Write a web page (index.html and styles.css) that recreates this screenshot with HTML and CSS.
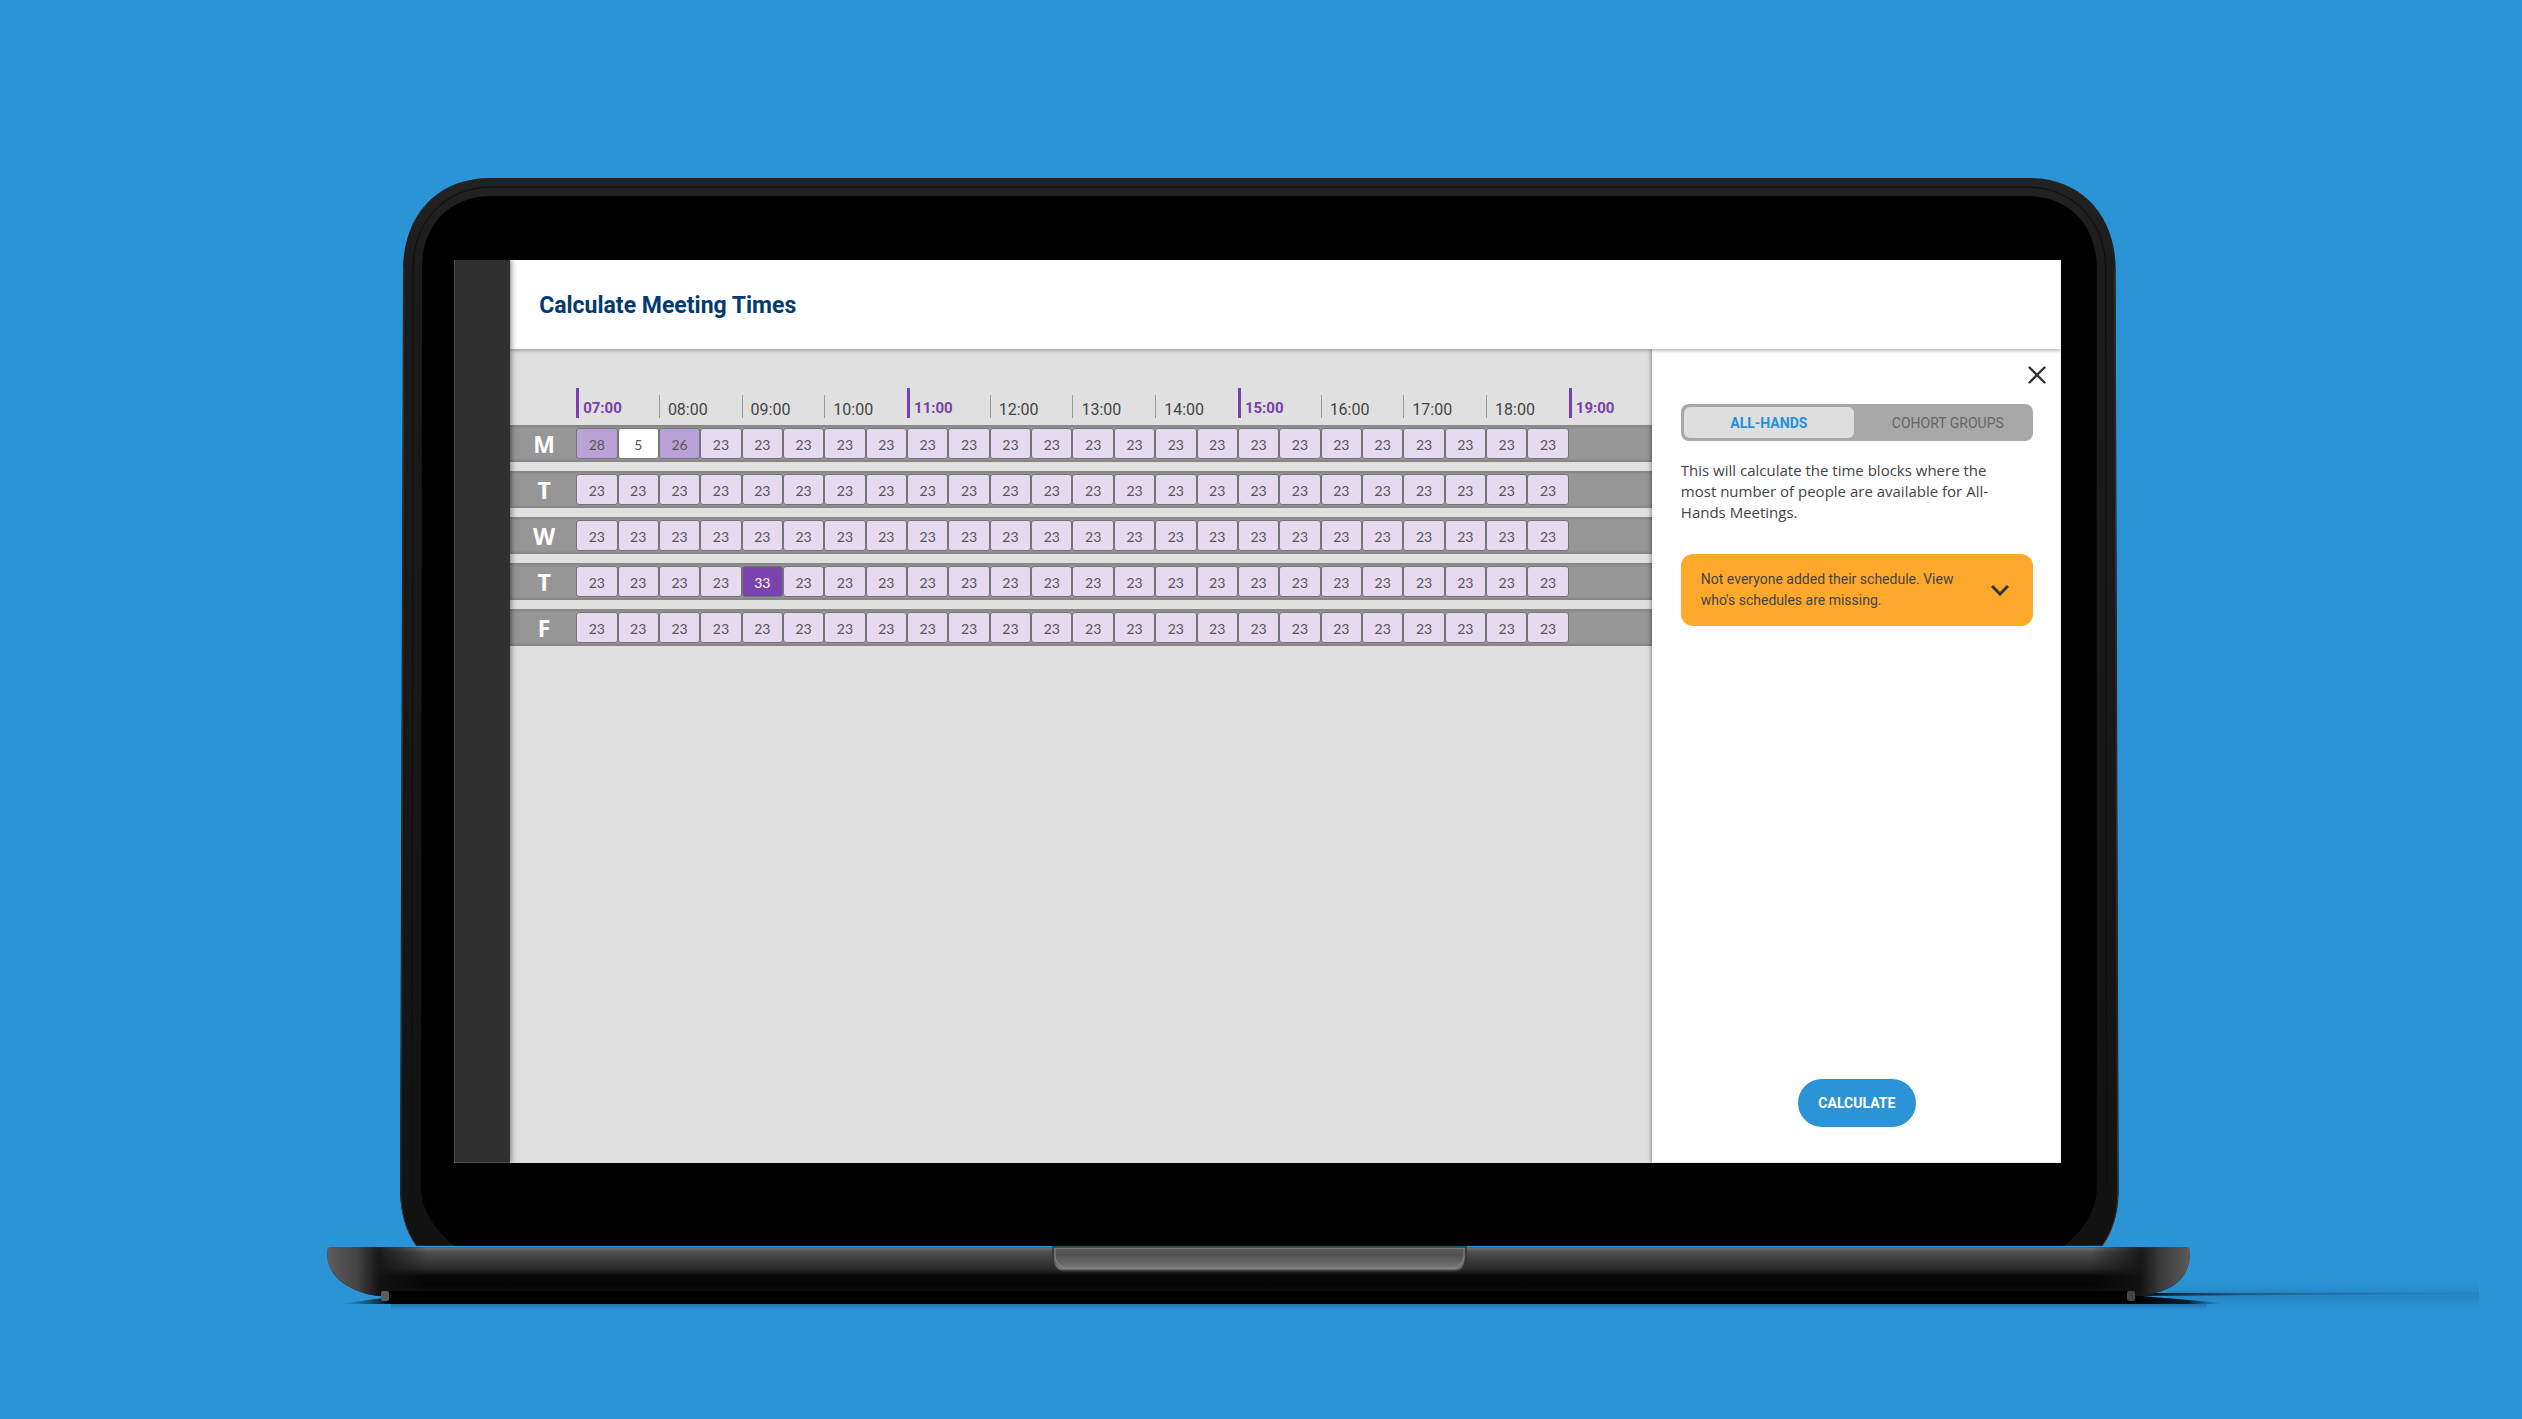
FILE: index.html
```
<!DOCTYPE html>
<html lang="en">
<head>
<meta charset="utf-8">
<meta name="viewport" content="width=device-width, initial-scale=1">
<title>Calculate Meeting Times</title>
<link rel="stylesheet" href="styles.css">
</head>
<body>
<div class="laptop">
  <div class="lid">
    <svg class="lid-shape" viewBox="0 0 1718 1068" preserveAspectRatio="none" aria-hidden="true">
      <defs>
        <linearGradient id="rim" x1="0" y1="0" x2="0" y2="1">
          <stop offset="0" stop-color="#222"/>
          <stop offset=".1" stop-color="#1b1b1b"/>
          <stop offset="1" stop-color="#121212"/>
        </linearGradient>
      </defs>
      <path fill="url(#rim)" d="M3 90C4 36 38 0 90 0H1628C1680 0 1714 36 1715 90L1718 1015Q1717 1046 1702 1068H16Q1 1046 0 1015Z"/>
      <path fill="none" stroke="#0e0e0e" d="M12 1010L13 90C14 42 46 9 92 9H1626C1672 9 1704 42 1705 90L1706 1010"/>
      <path fill="none" stroke="#3b302c" d="M1702 1067Q1717 1046 1717 1015L1714 90M16 1067Q1 1046 1 1015L4 90"/>
      <path fill="#000" d="M22 90C22 46 50 18 92 18H1626C1668 18 1696 46 1696 90V1015Q1693 1044 1664 1068H54Q25 1044 21 1015Z"/>
    </svg>
    <div class="screen">
      <nav class="rail" aria-label="Main"></nav>
      <div class="app">
        <header class="topbar"><h1>Calculate Meeting Times</h1></header>
        <div class="workspace">
          <main class="board">
            <table class="schedule">
              <colgroup><col class="col-day"><col span="24"><col class="col-end"></colgroup>
              <thead><tr id="hours"><td></td></tr></thead>
              <tbody id="days"></tbody>
            </table>
          </main>
          <aside class="panel">
            <button class="close" type="button" aria-label="Close">
              <svg viewBox="0 0 18 18" width="18" height="18"><path d="M1.5 1.5L16.5 16.5M16.5 1.5L1.5 16.5"/></svg>
            </button>
            <div class="tabs" role="tablist">
              <button class="tab tab-active" type="button" role="tab" aria-selected="true">ALL-HANDS</button>
              <button class="tab" type="button" role="tab" aria-selected="false">COHORT GROUPS</button>
            </div>
            <p class="intro">This will calculate the time blocks where the most number of people are available for All-Hands Meetings.</p>
            <button class="notice" type="button" aria-expanded="false">
              <span>Not everyone added their schedule. View who's schedules are missing.</span>
              <svg viewBox="0 0 18 12" width="18" height="12" aria-hidden="true"><path d="M1 2L9 10L17 2"/></svg>
            </button>
            <button class="calculate" type="button">CALCULATE</button>
          </aside>
        </div>
      </div>
    </div>
  </div>
  <svg class="base" viewBox="0 0 1864 60" preserveAspectRatio="none" aria-hidden="true">
    <defs>
      <linearGradient id="deck" x1="0" y1="0" x2="0" y2="50" gradientUnits="userSpaceOnUse">
        <stop offset="0" stop-color="#555"/>
        <stop offset=".05" stop-color="#6a6a6a"/>
        <stop offset=".13" stop-color="#4c4c4c"/>
        <stop offset=".45" stop-color="#2a2a2a"/>
        <stop offset=".6" stop-color="#070707"/>
        <stop offset=".8" stop-color="#050505"/>
        <stop offset="1" stop-color="#1a1a1a"/>
      </linearGradient>
      <linearGradient id="capLeft" x1="0" x2="100" y1="0" y2="0" gradientUnits="userSpaceOnUse">
        <stop offset="0" stop-color="#5c5c5c"/>
        <stop offset=".3" stop-color="#444"/>
        <stop offset=".52" stop-color="#141414" stop-opacity=".9"/>
        <stop offset="1" stop-color="#111" stop-opacity="0"/>
      </linearGradient>
      <linearGradient id="capRight" x1="1864" x2="1764" y1="0" y2="0" gradientUnits="userSpaceOnUse">
        <stop offset="0" stop-color="#5c5c5c"/>
        <stop offset=".3" stop-color="#3c3c3c"/>
        <stop offset=".5" stop-color="#141414" stop-opacity=".9"/>
        <stop offset="1" stop-color="#111" stop-opacity="0"/>
      </linearGradient>
      <linearGradient id="notch" x1="0" y1="0" x2="0" y2="1">
        <stop offset="0" stop-color="#aaa"/>
        <stop offset=".1" stop-color="#5c5c5c"/>
        <stop offset=".3" stop-color="#4f4f4f"/>
        <stop offset=".9" stop-color="#787878"/>
        <stop offset="1" stop-color="#555"/>
      </linearGradient>
      <linearGradient id="castNear" x1="1808" x2="1896" y1="0" y2="0" gradientUnits="userSpaceOnUse">
        <stop offset="0" stop-color="#000"/>
        <stop offset=".6" stop-color="#04141f" stop-opacity=".9"/>
        <stop offset="1" stop-color="#0f3d61" stop-opacity="0"/>
      </linearGradient>
      <linearGradient id="castFar" x1="1820" x2="2152" y1="0" y2="0" gradientUnits="userSpaceOnUse">
        <stop offset="0" stop-color="#04141f"/>
        <stop offset=".3" stop-color="#123f61" stop-opacity=".6"/>
        <stop offset="1" stop-color="#1b5c8c" stop-opacity="0.1"/>
      </linearGradient>
      <linearGradient id="haze" x1="0" y1="0" x2="0" y2="1">
        <stop offset="0" stop-color="#1c5f92" stop-opacity="0"/>
        <stop offset=".6" stop-color="#1c5f92" stop-opacity=".25"/>
        <stop offset="1" stop-color="#1c5f92" stop-opacity="0"/>
      </linearGradient>
      <linearGradient id="under" x1="0" y1="0" x2="0" y2="1">
        <stop offset="0" stop-color="#1c4f78" stop-opacity=".4"/>
        <stop offset="1" stop-color="#1c4f78" stop-opacity="0"/>
      </linearGradient>
      <linearGradient id="castLeft" x1="15" x2="62" y1="0" y2="0" gradientUnits="userSpaceOnUse">
        <stop offset="0" stop-color="#0b2e49" stop-opacity="0"/>
        <stop offset="1" stop-color="#03101a"/>
      </linearGradient>
    </defs>
    <path fill="url(#haze)" d="M1840 34H2152V62H1840Z"/>
    <path fill="url(#castFar)" d="M1806 47L2152 46.5V48L1806 50Z"/>
    <path fill="url(#castNear)" d="M1804 49L1896 57V58H1804Z"/>
    <path fill="url(#castLeft)" d="M15 57.5L56 52H64V58H15Z"/>
    <path fill="url(#under)" d="M64 58H1880V64H64Z"/>
    <path fill="#000" d="M62 40H1804V58H62Z"/>
    <path fill="url(#deck)" d="M4 1H1860Q1863 1 1863 7C1863 28 1850 42 1828 47Q1816 50 1808 50L1800 46H66L56 50Q44 50 34 46C12 38 0 26 0 6Q0 1 4 1Z"/>
    <path fill="url(#capLeft)" d="M4 1H100V46H66L56 50Q44 50 34 46C12 38 0 26 0 6Q0 1 4 1Z"/>
    <path fill="url(#capRight)" d="M1764 1H1860Q1863 1 1863 7C1863 28 1850 42 1828 47Q1816 50 1808 50L1800 46H1764Z"/>
    <path fill="#000" d="M60 45H1800V57H60Z"/>
    <rect x="54" y="45" width="8" height="10" rx="2" fill="#5e5e5e"/>
    <rect x="1800" y="45" width="8" height="10" rx="2" fill="#444"/>
    <path fill="url(#notch)" stroke="#333" stroke-width="1.5" d="M726 1H1139V11Q1138 25 1127 25H737Q726 25 726 11Z"/>
    <path fill="none" stroke="#888" d="M728 2V11Q729 19 738 22H1127Q1136 19 1137 11V2"/>
  </svg>
</div>
<script src="schedule.js"></script>
</body>
</html>
```
FILE: styles.css
```
* { box-sizing: border-box; }

body {
  margin: 0;
  min-height: 100vh;
  padding: 178px 3px 60px 0;
  background: #2a94d6;
  color: #444;
  font-family: Roboto, "Liberation Sans", sans-serif;
  overflow-x: hidden;
}

button {
  border: 0;
  margin: 0;
  padding: 0;
  background: none;
  font: inherit;
  color: inherit;
  cursor: pointer;
}

.laptop { width: 74%; margin: 0 auto; }

.lid {
  position: relative;
  margin: 0 3.9%;
  padding: 82px 58px 83px 54px;
}

.lid-shape {
  position: absolute;
  inset: 0;
  width: 100%;
  height: 100%;
}

.base {
  display: block;
  width: 100%;
  height: 60px;
  overflow: visible;
}

.screen {
  position: relative;
  display: flex;
  aspect-ratio: 1607 / 903;
  background: #e0e0e0;
}

.rail {
  position: relative;
  z-index: 2;
  flex: 0 0 56px;
  background: #303030;
  box-shadow: 1px 0 6px rgba(0, 0, 0, .5);
  clip-path: inset(0 -10px 0 0);
}

.app {
  flex: 1;
  min-width: 0;
  display: flex;
  flex-direction: column;
}

.topbar {
  position: relative;
  z-index: 1;
  height: 89px;
  padding: 2px 0 0 29px;
  display: flex;
  align-items: center;
  background: #fff;
  box-shadow: 0 1px 4px rgba(0, 0, 0, .4);
  clip-path: inset(0 0 -8px 0);
}

h1 {
  margin: 0;
  color: #003a70;
  font-size: 23px;
  line-height: 28px;
  font-weight: 700;
}

.workspace { flex: 1; display: flex; }

.board { flex: 1; min-width: 0; padding-top: 30px; }

.schedule {
  width: 100%;
  table-layout: fixed;
  border-collapse: separate;
  border-spacing: 0 9px;
}

.col-day { width: 66px; }
.col-end { width: 83px; }

.schedule th, .schedule td { padding: 0; }

.schedule thead td, .schedule thead th {
  height: 28px;
  vertical-align: top;
}

.hour {
  display: flex;
  align-items: flex-end;
  height: 23px;
  margin-top: 7px;
  margin-bottom: -2px;
  padding-left: 8px;
  border-left: 1px solid #999;
  color: #444;
  font-size: 16px;
  line-height: 16px;
  font-weight: 400;
}

.hour-major {
  height: 30px;
  margin-top: 0;
  padding: 0 0 2px 4px;
  border-left: 3px solid #7740ad;
  color: #7740ad;
  font-size: 15px;
  font-weight: 700;
}

.schedule tbody tr {
  background: #969696;
  box-shadow: inset 0 2px 2px #858585, inset 0 -2px 2px #858585;
}

.schedule tbody th {
  height: 37px;
  padding-left: 2px;
  color: #fff;
  font-family: "Open Sans", "Liberation Sans", sans-serif;
  font-size: 23px;
  line-height: 36px;
  font-weight: 700;
  text-align: center;
}

.slot {
  display: block;
  height: 31px;
  border: 1px solid #747474;
  border-radius: 3px;
  background: #e5daf0;
  color: #555;
  font-family: Lato, "Liberation Sans", sans-serif;
  font-size: 14px;
  line-height: 31px;
  text-align: center;
}

.slot-none { background: #fff; }
.slot-high { background: #baa2d9; }
.slot-best { background: #7a43ad; color: #fff; }

.panel {
  position: relative;
  flex: 0 0 409px;
  display: flex;
  flex-direction: column;
  padding: 55px 28px 36px 29px;
  background: #fff;
  box-shadow: -1px 0 4px rgba(0, 0, 0, .4);
  clip-path: inset(0 0 0 -8px);
}

.close {
  position: absolute;
  top: 16px;
  right: 14px;
  width: 20px;
  height: 20px;
}

svg { display: block; }

.close path, .notice path {
  fill: none;
  stroke: #333;
  stroke-width: 2.4;
  stroke-linecap: round;
}

.close svg { margin: auto; }

.tabs {
  display: flex;
  height: 37px;
  padding: 3px;
  border-radius: 8px;
  background: #a8a8a8;
}

.tab {
  flex: 1;
  padding-left: 12px;
  border-radius: 6px;
  color: #666;
  font-size: 14px;
  line-height: 20px;
}

.tab-active {
  flex: 0 0 170px;
  padding: 0;
  background: #dedede;
  color: #2191dc;
  font-weight: 700;
}

.intro {
  margin: 19px 0 0;
  padding-right: 16px;
  font-family: "Open Sans", "Liberation Sans", sans-serif;
  font-size: 15px;
  line-height: 21px;
}

.notice {
  display: flex;
  align-items: center;
  justify-content: space-between;
  height: 72px;
  margin-top: 31px;
  padding: 0 24px 0 20px;
  border-radius: 12px;
  background: #fea92c;
  text-align: left;
  font-size: 14px;
  line-height: 21px;
}

.notice span { width: 264px; }
.notice path { stroke-width: 3; stroke-linecap: butt; }

.calculate {
  align-self: center;
  width: 118px;
  height: 48px;
  margin-top: auto;
  border-radius: 24px;
  background: #2a94d6;
  color: #fff;
  font-size: 14px;
  font-weight: 700;
}
```
FILE: schedule.js
```
const FIRST_HOUR = 7;
const LAST_HOUR = 19;
const SLOTS = (LAST_HOUR - FIRST_HOUR) * 2;

// People available per half hour; every slot not listed has 23.
const week = [
  { day: "M", counts: { 0: 28, 1: 5, 2: 26 } },
  { day: "T", counts: {} },
  { day: "W", counts: {} },
  { day: "T", counts: { 4: 33 } },
  { day: "F", counts: {} },
];

function level(n) {
  if (n > 30) return " slot-best";
  if (n > 23) return " slot-high";
  return n < 10 ? " slot-none" : "";
}

let hours = "";
for (let h = FIRST_HOUR; h <= LAST_HOUR; h++) {
  const major = (h - FIRST_HOUR) % 4 === 0 ? " hour-major" : "";
  const span = h < LAST_HOUR ? 2 : 1;
  hours += `<th scope="col" colspan="${span}"><span class="hour${major}">${String(h).padStart(2, "0")}:00</span></th>`;
}
document.getElementById("hours").insertAdjacentHTML("beforeend", hours);

document.getElementById("days").innerHTML = week.map(({ day, counts }) => {
  let cells = "";
  for (let i = 0; i < SLOTS; i++) {
    const n = counts[i] ?? 23;
    cells += `<td><span class="slot${level(n)}">${n}</span></td>`;
  }
  return `<tr><th scope="row">${day}</th>${cells}<td></td></tr>`;
}).join("");
```
